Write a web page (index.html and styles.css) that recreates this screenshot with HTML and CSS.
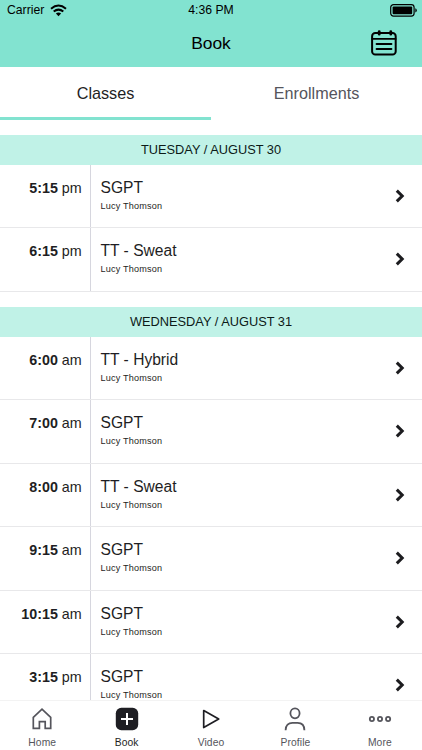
FILE: index.html
```html
<!DOCTYPE html>
<html lang="en">
<head>
    <meta charset="UTF-8">
    <meta name="viewport" content="width=device-width, initial-scale=1.0">
    <title>Book</title>
    <link rel="stylesheet" href="styles.css">
</head>
<body>
    <svg class="sprite">
        <symbol id="chevron" viewBox="0 0 10 14">
            <path d="M1.8 1.6L7.2 7 1.8 12.4" fill="none" stroke="#1c1c1f" stroke-width="3"/>
        </symbol>
    </svg>

    <div class="app">
        <header class="top">
            <div class="status-bar">
                <div class="carrier">
                    <span>Carrier</span>
                    <svg width="17" height="13" viewBox="0 0 17 13">
                        <g fill="none" stroke="#000" stroke-width="2">
                            <path d="M1 4.7Q8.5-1.6 16 4.7"/>
                            <path d="M3.7 7.6Q8.5 3.6 13.3 7.6"/>
                        </g>
                        <path d="M8.5 12.2L5.9 9.6Q8.5 7.4 11.1 9.6Z"/>
                    </svg>
                </div>
                <span class="clock">4:36 PM</span>
                <svg class="battery" width="28" height="13" viewBox="0 0 28 13">
                    <rect x=".7" y=".7" width="23.4" height="11.4" rx="2.8" fill="none" stroke="#000" stroke-width="1.2"/>
                    <rect x="2.6" y="2.6" width="19.6" height="7.6" rx="1"/>
                    <path d="M25.3 4.3q1.5.5 1.5 2.1t-1.5 2.1z"/>
                </svg>
            </div>
            <div class="title-bar">
                <h1>Book</h1>
                <svg class="calendar" width="26" height="26" viewBox="0 0 26 26" fill="none" stroke="#000" stroke-width="2" stroke-linecap="round">
                    <rect x="1.1" y="3" width="23.6" height="21.6" rx="3.2"/>
                    <path d="M1.2 8.9h23.4" stroke-width="1.7"/>
                    <path d="M8.2 1.6v2.6M19.8 1.6v2.6" stroke-width="2.8"/>
                    <path d="M5.6 14.1h14.8M5.6 19.1h14.8"/>
                </svg>
            </div>
        </header>

        <div class="tabs">
            <div class="tab active">Classes</div>
            <div class="tab">Enrollments</div>
        </div>

        <main class="schedule">
            <section class="day">
                <h2>TUESDAY / AUGUST 30</h2>
                <div class="row">
                    <div class="time"><b>5:15</b> pm</div>
                    <div class="info"><h3>SGPT</h3><p>Lucy Thomson</p></div>
                    <svg class="chevron"><use href="#chevron"/></svg>
                </div>
                <div class="row">
                    <div class="time"><b>6:15</b> pm</div>
                    <div class="info"><h3>TT - Sweat</h3><p>Lucy Thomson</p></div>
                    <svg class="chevron"><use href="#chevron"/></svg>
                </div>
            </section>

            <section class="day">
                <h2>WEDNESDAY / AUGUST 31</h2>
                <div class="row">
                    <div class="time"><b>6:00</b> am</div>
                    <div class="info"><h3>TT - Hybrid</h3><p>Lucy Thomson</p></div>
                    <svg class="chevron"><use href="#chevron"/></svg>
                </div>
                <div class="row">
                    <div class="time"><b>7:00</b> am</div>
                    <div class="info"><h3>SGPT</h3><p>Lucy Thomson</p></div>
                    <svg class="chevron"><use href="#chevron"/></svg>
                </div>
                <div class="row">
                    <div class="time"><b>8:00</b> am</div>
                    <div class="info"><h3>TT - Sweat</h3><p>Lucy Thomson</p></div>
                    <svg class="chevron"><use href="#chevron"/></svg>
                </div>
                <div class="row">
                    <div class="time"><b>9:15</b> am</div>
                    <div class="info"><h3>SGPT</h3><p>Lucy Thomson</p></div>
                    <svg class="chevron"><use href="#chevron"/></svg>
                </div>
                <div class="row">
                    <div class="time"><b>10:15</b> am</div>
                    <div class="info"><h3>SGPT</h3><p>Lucy Thomson</p></div>
                    <svg class="chevron"><use href="#chevron"/></svg>
                </div>
                <div class="row">
                    <div class="time"><b>3:15</b> pm</div>
                    <div class="info"><h3>SGPT</h3><p>Lucy Thomson</p></div>
                    <svg class="chevron"><use href="#chevron"/></svg>
                </div>
            </section>
        </main>

        <nav class="bottom-nav">
            <div class="nav-item">
                <svg width="24" height="24" viewBox="0 0 24 24" fill="none" stroke="#55555c" stroke-width="1.7">
                    <path d="M3.3 10.3L12 2.2l8.7 8.1v11.1h-5.5v-6.8H9.4v6.8H3.3z"/>
                </svg>
                <span>Home</span>
            </div>
            <div class="nav-item active">
                <svg width="24" height="24" viewBox="0 0 24 24">
                    <rect x=".8" y=".8" width="22.4" height="22.4" rx="5.5" fill="#1e1e23"/>
                    <path d="M12 6v12M6 12h12" stroke="#fff" stroke-width="2"/>
                </svg>
                <span>Book</span>
            </div>
            <div class="nav-item">
                <svg width="24" height="24" viewBox="0 0 24 24" fill="none" stroke="#1e1e23" stroke-width="1.7" stroke-linejoin="round">
                    <path d="M4.7 3.5L19.7 12 4.7 20.5z"/>
                </svg>
                <span>Video</span>
            </div>
            <div class="nav-item">
                <svg width="24" height="24" viewBox="0 0 24 24" fill="none" stroke="#55555c" stroke-width="1.8">
                    <ellipse cx="12" cy="6.3" rx="4.6" ry="5"/>
                    <path d="M2.6 23.3c0-5 3-7.4 6.8-7.4h5.2c3.8 0 6.8 2.4 6.8 7.4"/>
                </svg>
                <span>Profile</span>
            </div>
            <div class="nav-item">
                <svg width="24" height="24" viewBox="0 0 24 24" fill="none" stroke="#55555c" stroke-width="1.8">
                    <circle cx="3.9" cy="12" r="2.1"/>
                    <circle cx="12" cy="12" r="2.1"/>
                    <circle cx="20.1" cy="12" r="2.1"/>
                </svg>
                <span>More</span>
            </div>
        </nav>
    </div>
</body>
</html>
```
FILE: styles.css
```css
* {
    margin: 0;
    padding: 0;
    box-sizing: border-box;
}

body {
    background-color: #fff;
    color: #1e1e23;
    font-family: "Liberation Sans", Arial, sans-serif;
}

.sprite {
    display: none;
}

.app {
    display: flex;
    flex-direction: column;
    height: 750px;
    overflow: hidden;
}

.top {
    flex: none;
    height: 66.5px;
    background-color: #82e3d0;
    color: #000;
}

.status-bar {
    display: grid;
    grid-template-columns: 1fr auto 1fr;
    align-items: center;
    height: 20px;
    padding: 0 7px;
    font-size: 12.2px;
}

.carrier {
    display: flex;
    align-items: center;
    gap: 6px;
}

.battery {
    justify-self: end;
    margin-right: -3px;
}

.title-bar {
    display: grid;
    grid-template-columns: 1fr auto 1fr;
    align-items: center;
    height: 46px;
    padding: 0 25px;
}

h1 {
    grid-column: 2;
    font-size: 17.4px;
    font-weight: normal;
}

.calendar {
    justify-self: end;
}

.tabs {
    display: flex;
    flex: none;
    height: 53px;
}

.tab {
    flex: 1;
    padding-top: 17px;
    color: #55555c;
    font-size: 16.2px;
    line-height: 19px;
    text-align: center;
}

.tab.active {
    border-bottom: 3px solid #82e3d0;
    color: #1e1e23;
}

.schedule {
    flex: 1;
    min-height: 0;
    padding-top: 15.5px;
    overflow: hidden;
}

.day {
    margin-bottom: 15.5px;
}

.day h2 {
    height: 29.5px;
    background-color: #c0f2e7;
    color: #0c1a18;
    font-size: 12.8px;
    font-weight: normal;
    line-height: 29.5px;
    text-align: center;
}

.row {
    display: flex;
    height: 63.5px;
    border-bottom: 1px solid #e8e8ea;
}

.time {
    width: 91px;
    padding: 15px 8.3px 0 0;
    border-right: 1px solid #d6d6de;
    font-size: 14.3px;
    line-height: 17px;
    text-align: right;
}

.info {
    flex: 1;
    padding: 14px 0 0 9.5px;
}

.info h3 {
    font-size: 15.6px;
    font-weight: normal;
    line-height: 18px;
}

.info p {
    margin-top: 4px;
    font-size: 9.1px;
    letter-spacing: 0.2px;
    line-height: 11px;
}

.chevron {
    align-self: center;
    width: 10px;
    height: 14px;
    margin-right: 17.5px;
}

.bottom-nav {
    display: flex;
    flex: none;
    height: 50px;
    border-top: 1px solid #f3f3f3;
    background-color: #fff;
}

.nav-item {
    display: flex;
    flex: 1;
    flex-direction: column;
    align-items: center;
    gap: 4px;
    padding-top: 6px;
    color: #55555c;
    font-size: 10.3px;
    letter-spacing: 0.1px;
    line-height: 15px;
}

.nav-item.active {
    color: #1e1e23;
}
```
